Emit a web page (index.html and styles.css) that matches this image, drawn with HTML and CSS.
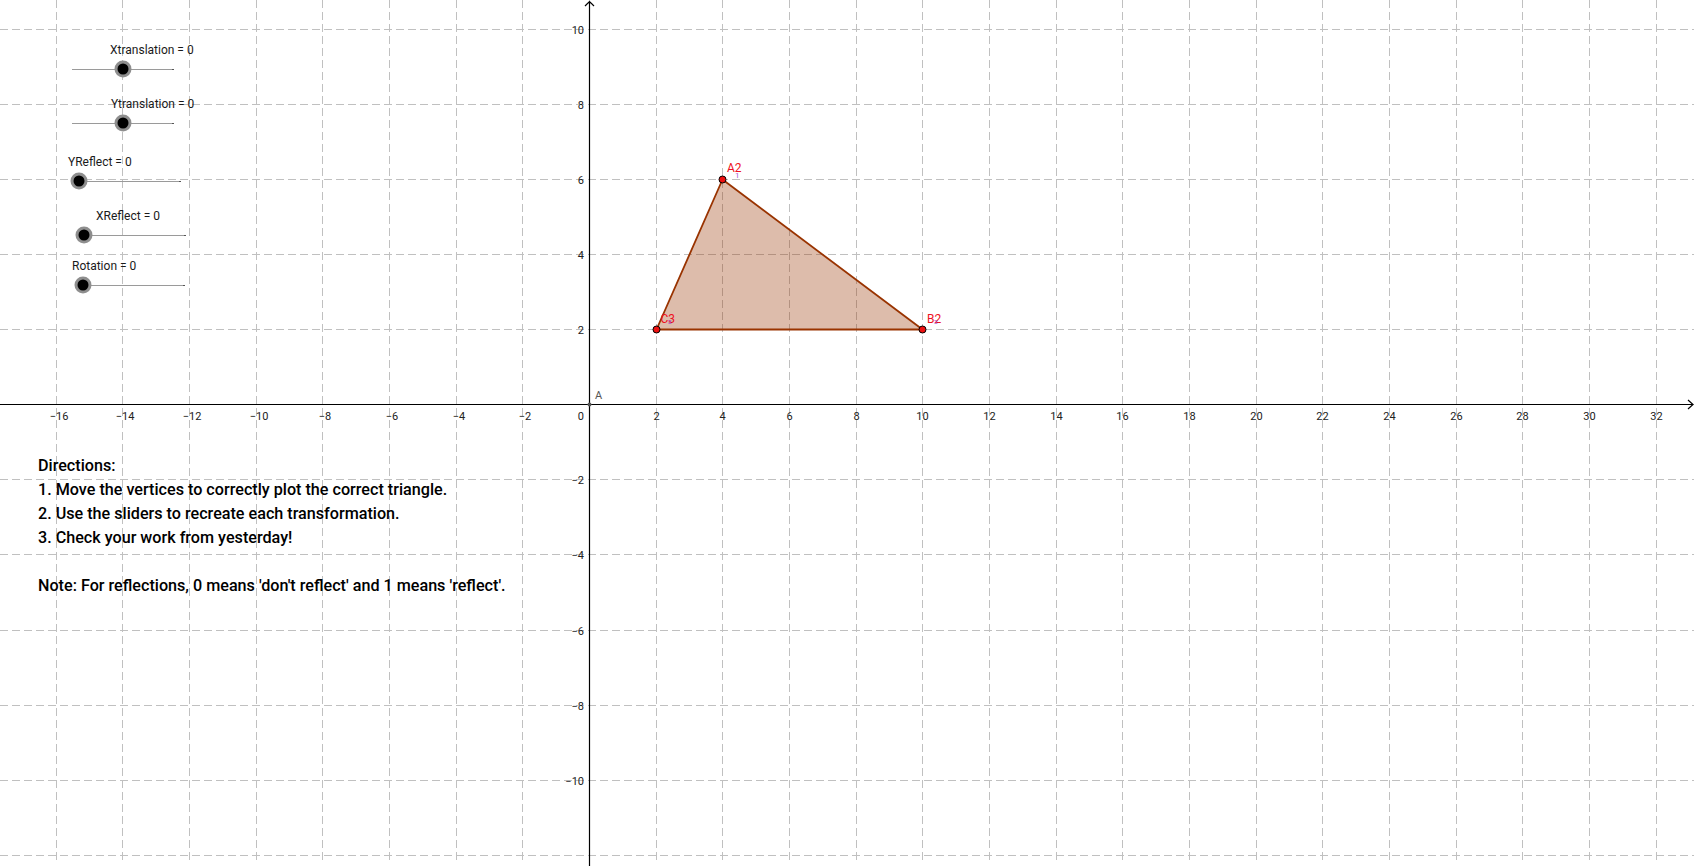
FILE: index.html
```html
<!DOCTYPE html>
<html lang="en">
<head>
<meta charset="utf-8">
<title>Transformations</title>
<link rel="stylesheet" href="styles.css">
</head>
<body>
<div class="applet">
  <svg class="board" width="1696" height="866" viewBox="0 0 1696 866" xmlns="http://www.w3.org/2000/svg">
    <g class="grid">
      <path d="M56.5 0V862M122.5 0V862M189.5 0V862M256.5 0V862M322.5 0V862M389.5 0V862M456.5 0V862M522.5 0V862M589.5 0V862M656.5 0V862M722.5 0V862M789.5 0V862M856.5 0V862M922.5 0V862M989.5 0V862M1056.5 0V862M1122.5 0V862M1189.5 0V862M1256.5 0V862M1322.5 0V862M1389.5 0V862M1456.5 0V862M1522.5 0V862M1589.5 0V862M1656.5 0V862"/>
      <path d="M0 29.5H1694M0 104.5H1694M0 179.5H1694M0 254.5H1694M0 329.5H1694M0 404.5H1694M0 479.5H1694M0 554.5H1694M0 630.5H1694M0 705.5H1694M0 780.5H1694M0 855.5H1694"/>
    </g>
    <g class="axes">
      <path d="M0 404.5H1693M1688 400L1693 404.5L1688 409"/>
      <path d="M589.5 866V1.5M585 6L589.5 1.5L594 6"/>
    </g>
    <g class="xlabels">
      <text x="59" y="420">−16</text>
      <text x="125" y="420">−14</text>
      <text x="192" y="420">−12</text>
      <text x="259" y="420">−10</text>
      <text x="325" y="420">−8</text>
      <text x="392" y="420">−6</text>
      <text x="459" y="420">−4</text>
      <text x="525" y="420">−2</text>
      <text x="656.5" y="420">2</text>
      <text x="722.5" y="420">4</text>
      <text x="789.5" y="420">6</text>
      <text x="856.5" y="420">8</text>
      <text x="922.5" y="420">10</text>
      <text x="989.5" y="420">12</text>
      <text x="1056.5" y="420">14</text>
      <text x="1122.5" y="420">16</text>
      <text x="1189.5" y="420">18</text>
      <text x="1256.5" y="420">20</text>
      <text x="1322.5" y="420">22</text>
      <text x="1389.5" y="420">24</text>
      <text x="1456.5" y="420">26</text>
      <text x="1522.5" y="420">28</text>
      <text x="1589.5" y="420">30</text>
      <text x="1656.5" y="420">32</text>
    </g>
    <g class="ylabels">
      <text x="584" y="420">0</text>
      <text x="584" y="33.5">10</text>
      <text x="584" y="108.5">8</text>
      <text x="584" y="183.5">6</text>
      <text x="584" y="258.5">4</text>
      <text x="584" y="333.5">2</text>
      <text x="584" y="483.5">−2</text>
      <text x="584" y="558.5">−4</text>
      <text x="584" y="634.5">−6</text>
      <text x="584" y="709.5">−8</text>
      <text x="584" y="784.5">−10</text>
    </g>
    <g class="origin-point">
      <circle cx="589.5" cy="404.5" r="2"/>
      <text x="595" y="399">A</text>
    </g>
    <polygon class="tri" points="722.5,179.5 922.5,329.5 656.5,329.5"/>
    <g class="vertices">
      <circle cx="722.5" cy="179.5" r="3.5"/>
      <circle cx="922.5" cy="329.5" r="3.5"/>
      <circle cx="656.5" cy="329.5" r="3.5"/>
    </g>
    <g class="vlabels">
      <text x="727" y="172">A2</text>
      <text class="ghost" x="735" y="178">1</text>
      <text x="927" y="323">B2</text>
      <text class="ghost" x="934" y="324">ɜ</text>
      <text x="660.5" y="323">C3</text>
      <text class="ghost" x="668" y="324">ɜ</text>
    </g>
  </svg>

  <div class="slider slider-xt">
    <div class="slider-label">Xtranslation = 0</div>
    <div class="track"><span class="knob knob-mid"></span></div>
  </div>
  <div class="slider slider-yt">
    <div class="slider-label">Ytranslation = 0</div>
    <div class="track"><span class="knob knob-mid"></span></div>
  </div>
  <div class="slider slider-yr">
    <div class="slider-label">YReflect = 0</div>
    <div class="track"><span class="knob knob-min"></span></div>
  </div>
  <div class="slider slider-xr">
    <div class="slider-label">XReflect = 0</div>
    <div class="track"><span class="knob knob-min"></span></div>
  </div>
  <div class="slider slider-rot">
    <div class="slider-label">Rotation = 0</div>
    <div class="track"><span class="knob knob-min"></span></div>
  </div>

  <div class="directions">
    <p>Directions:</p>
    <p>1. Move the vertices to correctly plot the correct triangle.</p>
    <p>2. Use the sliders to recreate each transformation.</p>
    <p>3. Check your work from yesterday!</p>
    <p class="blank">&nbsp;</p>
    <p>Note: For reflections, 0 means 'don't reflect' and 1 means 'reflect'.</p>
  </div>
</div>
</body>
</html>
```

FILE: styles.css
```css
html, body {
  margin: 0;
  padding: 0;
  background: #fff;
  overflow: hidden;
}

.applet {
  position: relative;
  width: 1696px;
  height: 866px;
  font-family: Roboto, "Liberation Sans", sans-serif;
  color: #000;
}

.board {
  display: block;
}

.grid path {
  fill: none;
  stroke: #c0c0c0;
  stroke-width: 1;
  stroke-dasharray: 8 4;
  shape-rendering: crispEdges;
}

.axes path {
  fill: none;
  stroke: #000;
  stroke-width: 1.2;
}

.xlabels text,
.ylabels text {
  font-family: Roboto, "Liberation Sans", sans-serif;
  font-size: 11px;
  fill: #222;
}

.xlabels text {
  text-anchor: middle;
}

.ylabels text {
  text-anchor: end;
}

.origin-point circle {
  fill: #555;
}

.origin-point text {
  font-family: Roboto, sans-serif;
  font-size: 11px;
  fill: #555;
}

.tri {
  fill: rgb(153, 51, 0);
  fill-opacity: 0.33;
  stroke: #993300;
  stroke-width: 1.8;
  stroke-linejoin: round;
}

.vertices circle {
  fill: #ee1111;
  stroke: #000;
  stroke-width: 1;
}

.vlabels text {
  font-family: Roboto, sans-serif;
  font-size: 12px;
  fill: #ee1122;
}

.vlabels .ghost {
  font-size: 8px;
  fill: #9933cc;
  opacity: 0.8;
}

/* sliders */
.slider {
  position: absolute;
  width: 101px;
}

.slider-xt { left: 72px; top: 43px; }
.slider-yt { left: 72px; top: 97px; }
.slider-yr { left: 79px; top: 155px; }
.slider-xr { left: 84px; top: 209px; }
.slider-rot { left: 83px; top: 259px; }

.slider-label {
  font-size: 12px;
  line-height: 14px;
  white-space: nowrap;
  color: #1a1a1a;
}

.slider-xt .slider-label { margin-left: 38px; }
.slider-yt .slider-label { margin-left: 39px; }
.slider-yr .slider-label { margin-left: -11px; }
.slider-xr .slider-label { margin-left: 12px; }
.slider-rot .slider-label { margin-left: -11px; }

.track {
  position: relative;
  margin-top: 12px;
  height: 1px;
  background: #9a9a9a;
}

.track::after {
  content: "";
  position: absolute;
  right: -1px;
  top: 0;
  width: 2px;
  height: 1px;
  background: #555;
}

.knob {
  position: absolute;
  top: 0;
  width: 11px;
  height: 11px;
  border-radius: 50%;
  background: #000;
  box-shadow: 0 0 0 3px #8e8e8e;
  transform: translate(-50%, -50%);
  z-index: 1;
}

.knob-mid { left: 50%; }
.knob-min { left: 0; }

/* directions text */
.directions {
  position: absolute;
  left: 38px;
  top: 453px;
  font-size: 17px;
  font-weight: 500;
  line-height: 24px;
  white-space: nowrap;
  transform: scaleX(0.95);
  transform-origin: 0 0;
}

.directions p {
  margin: 0;
}
```
